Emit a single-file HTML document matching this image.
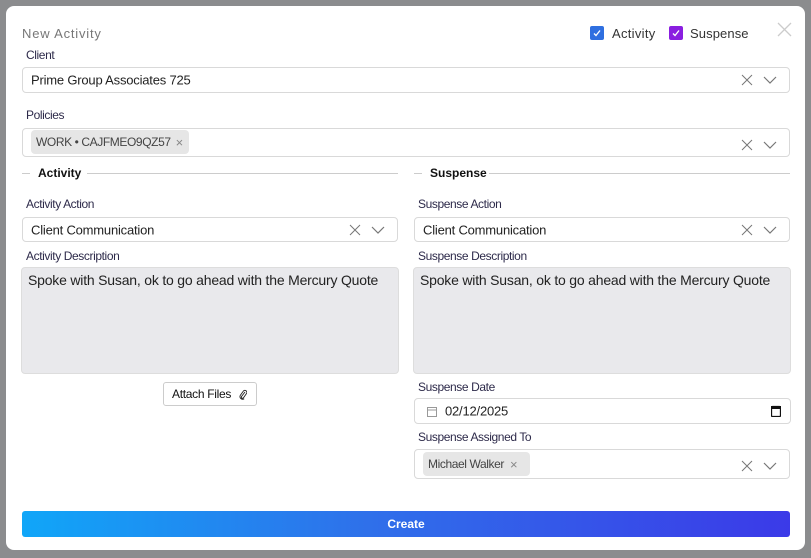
<!DOCTYPE html>
<html><head><style>
*{box-sizing:border-box;margin:0;padding:0}
body{width:811px;height:558px;background:#8b8c8e;font-family:"Liberation Sans",sans-serif;position:relative;overflow:hidden}
.abs{position:absolute}
.modal{position:absolute;left:6px;top:6px;width:799px;height:544px;background:#fff;border-radius:8px}
.lbl{position:absolute;font-size:12px;color:#2d2a4a;letter-spacing:-0.4px;white-space:nowrap}
.inp{position:absolute;border:1px solid #d9d9d9;border-radius:4px;background:#fff;font-size:13px;color:#222}
.inp .t{position:absolute;left:8px;top:50%;transform:translateY(-50%);letter-spacing:-0.2px;white-space:nowrap}
.ic{position:absolute;right:10px;top:50%;transform:translateY(-50%)}
.chip{position:absolute;background:#e6e6e6;border-radius:4px;font-size:12px;color:#444;padding:0 5px;display:flex;align-items:center;letter-spacing:-0.4px;white-space:nowrap}
.ta{position:absolute;background:#e9e9ec;border:1px solid #ddd;border-radius:4px;font-size:14px;color:#222;padding:4px 6px;letter-spacing:-0.2px}
.sec{position:absolute;font-size:12px;font-weight:bold;color:#111}
.hr{position:absolute;height:1px;background:#ccc}
</style></head><body>
<div class="modal"></div>
<div class="abs" style="left:22px;top:26px;font-size:13px;color:#777;letter-spacing:0.8px">New Activity</div>
<svg class="abs" style="left:590px;top:26px" width="14" height="14"><rect width="14" height="14" rx="2" fill="#2f6fe0"/><path d="M4 7.5L6 9.5L10 4.5" stroke="#fff" fill="none" stroke-width="1.3"/></svg>
<div class="abs" style="left:612px;top:26px;font-size:13px;color:#333;letter-spacing:0.3px">Activity</div>
<svg class="abs" style="left:669px;top:26px" width="14" height="14"><rect width="14" height="14" rx="2" fill="#8a1ee0"/><path d="M4 7.5L6 9.5L10 4.5" stroke="#fff" fill="none" stroke-width="1.3"/></svg>
<div class="abs" style="left:690px;top:26px;font-size:13px;color:#333;letter-spacing:0.1px">Suspense</div>
<svg class="abs" style="left:777px;top:22px" width="15" height="15"><path d="M1 1L14 14M14 1L1 14" stroke="#ccc" stroke-width="1.3"/></svg>

<div class="lbl" style="left:26px;top:48px">Client</div>
<div class="inp" style="left:22px;top:67px;width:768px;height:26px"><span class="t">Prime Group Associates 725</span>
<svg class="ic" width="38" height="12"><path d="M1 1L11 11M11 1L1 11" stroke="#777" fill="none"/><path d="M23 3L29 9L35 3" stroke="#777" fill="none" stroke-width="1.2"/></svg></div>

<div class="lbl" style="left:26px;top:108px">Policies</div>
<div class="inp" style="left:22px;top:128px;width:768px;height:29px">
<svg class="ic" style="top:60%" width="38" height="12"><path d="M1 1L11 11M11 1L1 11" stroke="#777" fill="none"/><path d="M23 3L29 9L35 3" stroke="#777" fill="none" stroke-width="1.2"/></svg></div>
<div class="chip" style="left:31px;top:130px;height:24px;width:158px">WORK • CAJFMEO9QZ57 <span style="color:#888;margin-left:5px;font-size:13px">×</span></div>

<div class="hr" style="left:22px;top:173px;width:8px"></div>
<div class="sec" style="left:38px;top:166px">Activity</div>
<div class="hr" style="left:87px;top:173px;width:311px"></div>
<div class="hr" style="left:414px;top:173px;width:8px"></div>
<div class="sec" style="left:430px;top:166px">Suspense</div>
<div class="hr" style="left:489px;top:173px;width:301px"></div>

<div class="lbl" style="left:26px;top:197px">Activity Action</div>
<div class="inp" style="left:22px;top:217px;width:376px;height:25px"><span class="t">Client Communication</span>
<svg class="ic" width="38" height="12"><path d="M1 1L11 11M11 1L1 11" stroke="#777" fill="none"/><path d="M23 3L29 9L35 3" stroke="#777" fill="none" stroke-width="1.2"/></svg></div>
<div class="lbl" style="left:418px;top:197px">Suspense Action</div>
<div class="inp" style="left:414px;top:217px;width:376px;height:25px"><span class="t">Client Communication</span>
<svg class="ic" width="38" height="12"><path d="M1 1L11 11M11 1L1 11" stroke="#777" fill="none"/><path d="M23 3L29 9L35 3" stroke="#777" fill="none" stroke-width="1.2"/></svg></div>

<div class="lbl" style="left:26px;top:249px">Activity Description</div>
<div class="ta" style="left:21px;top:267px;width:378px;height:107px">Spoke with Susan, ok to go ahead with the Mercury Quote</div>
<div class="lbl" style="left:418px;top:249px">Suspense Description</div>
<div class="ta" style="left:413px;top:267px;width:378px;height:107px">Spoke with Susan, ok to go ahead with the Mercury Quote</div>

<div class="abs" style="left:163px;top:382px;width:94px;height:24px;border:1px solid #ccc;border-radius:3px;font-size:12px;color:#111;line-height:22px;letter-spacing:-0.3px;padding-left:8px;white-space:nowrap">Attach Files
<svg style="position:absolute;right:9px;top:6px" width="8" height="11"><path d="M6 3L2.5 7.5a1.2 1.2 0 0 0 1.8 1.5L7.5 4.5a2 2 0 0 0-3-2.6L1.2 6.5a2.7 2.7 0 0 0 4 3.3" stroke="#222" fill="none" stroke-width="0.9"/></svg></div>

<div class="lbl" style="left:418px;top:380px">Suspense Date</div>
<div class="inp" style="left:414px;top:398px;width:377px;height:26px">
<svg class="abs" style="left:12px;top:7px" width="10" height="11"><rect x="0.5" y="1.5" width="9" height="9" fill="none" stroke="#999"/><path d="M0 4H10" stroke="#999"/></svg>
<span class="t" style="left:30px">02/12/2025</span>
<svg class="abs" style="right:9px;top:6px" width="10" height="12"><rect x="0.5" y="1.5" width="9" height="10" rx="1" fill="none" stroke="#111" stroke-width="1.3"/><rect x="0" y="1" width="10" height="3" fill="#111"/></svg></div>

<div class="lbl" style="left:418px;top:430px">Suspense Assigned To</div>
<div class="inp" style="left:414px;top:449px;width:376px;height:30px">
<svg class="ic" style="top:57%" width="38" height="12"><path d="M1 1L11 11M11 1L1 11" stroke="#777" fill="none"/><path d="M23 3L29 9L35 3" stroke="#777" fill="none" stroke-width="1.2"/></svg></div>
<div class="chip" style="left:423px;top:452px;height:24px;width:107px">Michael Walker <span style="color:#888;margin-left:6px;font-size:13px">×</span></div>

<div class="abs" style="left:22px;top:511px;width:768px;height:26px;border-radius:3px;background:linear-gradient(90deg,#10a6f8,#2f70ea 45%,#3b3ae8);color:#fff;font-size:12px;font-weight:bold;text-align:center;line-height:26px">Create</div>
</body></html>
